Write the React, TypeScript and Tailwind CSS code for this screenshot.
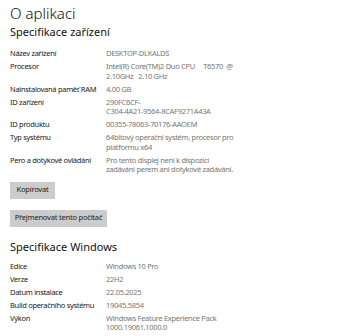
const device = [
  { label: "Název zařízení", value: ["DESKTOP-DLKALDS"] },
  { label: "Procesor", value: ["Intel(R) Core(TM)2 Duo CPU     T6570  @", "2.10GHz   2.10 GHz"] },
  { label: "Nainstalovaná paměť RAM", value: ["4.00 GB"] },
  { label: "ID zařízení", value: ["290FC6CF-", "C304-4A21-9564-8CAF9271A43A"] },
  { label: "ID produktu", value: ["00355-78063-70176-AAOEM"] },
  { label: "Typ systému", value: ["64bitový operační systém, procesor pro", "platformu x64"] },
  { label: "Pero a dotykové ovládání", value: ["Pro tento displej není k dispozici", "zadávání perem ani dotykové zadávání."] },
];

const windows = [
  { label: "Edice", value: ["Windows 10 Pro"] },
  { label: "Verze", value: ["22H2"] },
  { label: "Datum instalace", value: ["22.05.2025"] },
  { label: "Build operačního systému", value: ["19045.5854"] },
  { label: "Výkon", value: ["Windows Feature Experience Pack", "1000.19061.1000.0"] },
];

function Rows({ rows }: { rows: { label: string; value: string[] }[] }) {
  return (
    <div className="flex flex-col gap-[3.5px]">
      {rows.map((r) => (
        <div key={r.label} className="flex text-[7.5px] leading-[9.5px] tracking-[-0.3px]">
          <div className="w-[96px] shrink-0 text-[#1a1a1a]">{r.label}</div>
          <div className="text-[#767676] whitespace-pre">
            {r.value.map((v) => (
              <div key={v}>{v}</div>
            ))}
          </div>
        </div>
      ))}
    </div>
  );
}

export default function App() {
  return (
    <div
      className="w-[340px] h-[336px] bg-white overflow-hidden pl-[10px] pt-[3px]"
      style={{ fontFamily: '"Noto Sans", sans-serif' }}
    >
      <h1 className="text-[15px] leading-[20px] font-light text-[#111]">O aplikaci</h1>
      <h2 className="text-[11px] leading-[16px] text-[#111] mt-[1px]">Specifikace zařízení</h2>
      <div className="mt-[9px]">
        <Rows rows={device} />
      </div>
      <button className="mt-[7px] block bg-[#cccccc] text-[#1a1a1a] text-[7.5px] leading-[9.5px] tracking-[-0.2px] w-[45px] h-[17px]">
        Kopírovat
      </button>
      <button className="mt-[11px] block bg-[#cccccc] text-[#1a1a1a] text-[7.5px] leading-[9.5px] tracking-[-0.2px] w-[97px] h-[17px]">
        Přejmenovat tento počítač
      </button>
      <h2 className="text-[11px] leading-[16px] text-[#111] mt-[12px]">Specifikace Windows</h2>
      <div className="mt-[7px]">
        <Rows rows={windows} />
      </div>
    </div>
  );
}
